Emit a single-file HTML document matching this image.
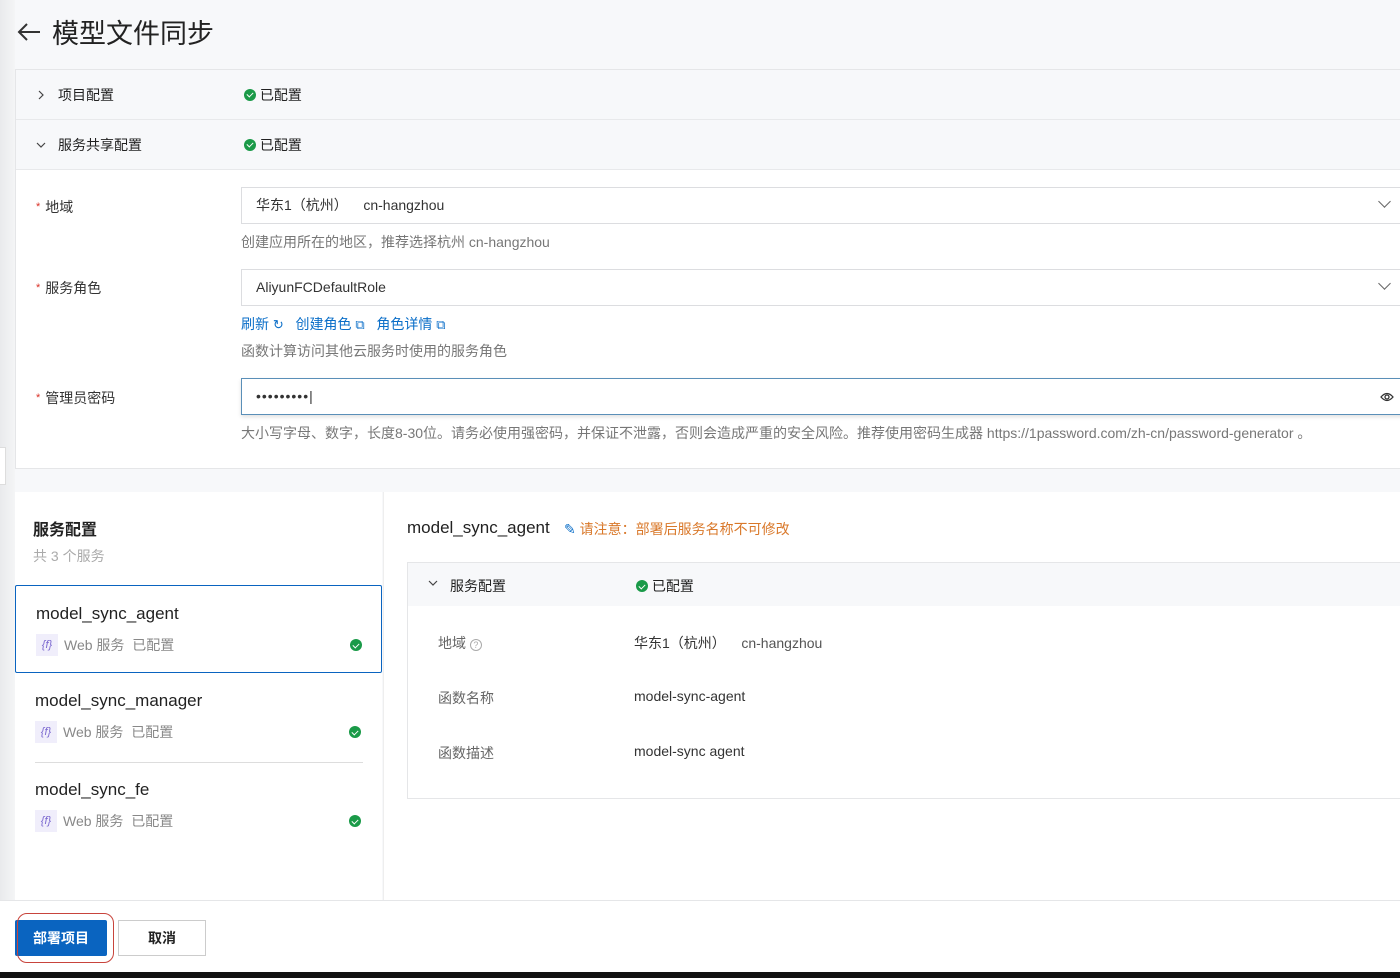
<!DOCTYPE html>
<html><head><meta charset="utf-8"><style>
*{box-sizing:border-box;margin:0;padding:0}
body{width:1400px;height:978px;overflow:hidden;background:#f7f8fa;font-family:"Liberation Sans","Noto Sans CJK SC",sans-serif;color:#333;position:relative;font-size:14px}
.abs{position:absolute}
.strip{left:0;top:0;width:15px;height:972px;background:linear-gradient(90deg,#e9eaec,#f4f5f6)}
.title{left:16px;top:12px;font-size:27px;color:#222;display:flex;align-items:center;gap:10px}
.panel{left:15px;top:69px;width:1390px;height:400px;border:1px solid #e5e6e8;background:#fff}
.row{position:absolute;left:0;width:100%;height:50px;background:#f7f8fa;border-bottom:1px solid #e8e9eb;display:flex;align-items:center}
.row .lab{position:absolute;left:42px;font-size:14px;color:#222}
.row svg{position:absolute;left:20px}
.ok{display:inline-block;width:12px;height:12px;border-radius:50%;background:#1a9a48;position:relative;vertical-align:-1px}
.ok:after{content:"";position:absolute;left:3.5px;top:2.5px;width:3px;height:5px;border:solid #fff;border-width:0 1.5px 1.5px 0;transform:rotate(45deg)}
.st{position:absolute;left:228px;font-size:14px;color:#222}
.flab{position:absolute;left:20px;font-size:14px;color:#333}
.flab b{color:#d93026;font-weight:normal;font-size:11px;margin-right:5px;vertical-align:2px}
.inp{position:absolute;left:225px;width:1170px;height:37px;border:1px solid #dcdde0;background:#fff;font-size:14px;padding-left:14px;line-height:35px;color:#333}
.inp .dd{position:absolute;left:1138px;top:9px;width:9px;height:9px;border:solid #666;border-width:0 1.3px 1.3px 0;transform:rotate(45deg)}
.help{position:absolute;left:225px;font-size:14px;color:#777}
.link{color:#0a6ec8}
.left{left:15px;top:492px;width:367px;height:408px;background:#fff}
.right{left:383px;top:492px;width:1017px;height:408px;background:#fff;border-left:1px solid #eee}
.svc{position:absolute;left:0;width:367px;height:88px}
.svc .n{position:absolute;left:20px;top:18px;font-size:17px;color:#222}
.svc .m{position:absolute;left:20px;top:48px;font-size:14px;color:#888;display:flex;align-items:center;gap:6px}
.fi{width:22px;height:22px;background:#f0eefb;color:#7b68d0;font-size:11px;text-align:center;line-height:22px;font-style:italic}
.svc .ok{position:absolute;left:334px;top:53px}
.foot{left:0;top:900px;width:1400px;height:72px;background:#fff;border-top:1px solid #e5e6e8}
.black{left:0;top:972px;width:1400px;height:6px;background:#111}
</style></head><body>
<div class="abs strip"></div>
<div class="abs" style="left:0;top:447px;width:6px;height:38px;background:#fff;border:1px solid #ddd;border-left:none"></div>
<div class="abs title"><svg width="26" height="20" viewBox="0 0 26 20"><path d="M24 10H3M11 2L3 10l8 8" fill="none" stroke="#333" stroke-width="2"/></svg><span>模型文件同步</span></div>

<div class="abs panel">
 <div class="row" style="top:0"><svg width="10" height="10" viewBox="0 0 10 10"><path d="M3 1l4 4-4 4" fill="none" stroke="#444" stroke-width="1.2"/></svg><span class="lab">项目配置</span><span class="st"><span class="ok"></span> 已配置</span></div>
 <div class="row" style="top:50px"><svg width="10" height="10" viewBox="0 0 10 10"><path d="M1 3l4 4 4-4" fill="none" stroke="#444" stroke-width="1.2"/></svg><span class="lab">服务共享配置</span><span class="st"><span class="ok"></span> 已配置</span></div>
 <div class="flab" style="top:127px"><b>*</b>地域</div>
 <div class="inp" style="top:117px">华东1（杭州）&nbsp;&nbsp;&nbsp; cn-hangzhou<span class="dd"></span></div>
 <div class="help" style="top:162px">创建应用所在的地区，推荐选择杭州 cn-hangzhou</div>
 <div class="flab" style="top:208px"><b>*</b>服务角色</div>
 <div class="inp" style="top:199px">AliyunFCDefaultRole<span class="dd"></span></div>
 <div class="help link" style="top:244px">刷新 <span style="font-size:13px">↻</span>&nbsp;&nbsp; 创建角色 <span style="font-size:13px">⧉</span>&nbsp;&nbsp; 角色详情 <span style="font-size:13px">⧉</span></div>
 <div class="help" style="top:271px">函数计算访问其他云服务时使用的服务角色</div>
 <div class="flab" style="top:318px"><b>*</b>管理员密码</div>
 <div class="inp" style="top:308px;border-color:#5a8fb8;box-shadow:0 2px 4px rgba(0,0,0,.12);letter-spacing:1px">•••••••••|<svg style="position:absolute;left:1138px;top:12px" width="14" height="12" viewBox="0 0 14 12"><path d="M1 6Q7-1 13 6Q7 13 1 6Z" fill="none" stroke="#333" stroke-width="1.3"/><circle cx="7" cy="6" r="2" fill="none" stroke="#333" stroke-width="1.3"/></svg></div>
 <div class="help" style="top:353px">大小写字母、数字，长度8-30位。请务必使用强密码，并保证不泄露，否则会造成严重的安全风险。推荐使用密码生成器 https://1password.com/zh-cn/password-generator 。</div>
</div>

<div class="abs left">
 <div class="abs" style="left:18px;top:24px;font-size:16px;font-weight:bold;color:#222">服务配置</div>
 <div class="abs" style="left:18px;top:54px;font-size:14px;color:#aaa">共 3 个服务</div>
 <div class="svc" style="top:93px;border:1.5px solid #0a64c0;border-radius:2px"><div class="n">model_sync_agent</div><div class="m"><span class="fi">{f}</span>Web 服务 &nbsp;已配置</div><span class="ok"></span></div>
 <div class="svc" style="top:181px"><div class="n">model_sync_manager</div><div class="m"><span class="fi">{f}</span>Web 服务 &nbsp;已配置</div><span class="ok"></span></div>
 <div class="abs" style="left:20px;top:270px;width:328px;height:1px;background:#ddd"></div>
 <div class="svc" style="top:270px"><div class="n">model_sync_fe</div><div class="m"><span class="fi">{f}</span>Web 服务 &nbsp;已配置</div><span class="ok"></span></div>
</div>

<div class="abs right">
 <div class="abs" style="left:23px;top:26px;font-size:17px;color:#222">model_sync_agent</div>
 <div class="abs" style="left:180px;top:27px;font-size:14px;color:#d9782a"><span style="color:#0a6ec8">✎</span> 请注意：部署后服务名称不可修改</div>
 <div class="abs" style="left:23px;top:70px;width:1000px;height:237px;border:1px solid #e5e6e8;background:#fff">
  <div class="abs" style="left:0;top:0;width:100%;height:43px;background:#f7f8fa"></div>
  <svg class="abs" style="left:20px;top:15px" width="10" height="10" viewBox="0 0 10 10"><path d="M1 3l4 4 4-4" fill="none" stroke="#444" stroke-width="1.2"/></svg>
  <div class="abs" style="left:42px;top:13px;font-size:14px;color:#222">服务配置</div>
  <div class="abs" style="left:228px;top:13px;font-size:14px;color:#222"><span class="ok"></span> 已配置</div>
  <div class="abs" style="left:30px;top:70px;color:#666">地域 <span style="display:inline-block;width:12px;height:12px;border:1px solid #aaa;border-radius:50%;font-size:9px;text-align:center;line-height:11px;color:#aaa">?</span></div>
  <div class="abs" style="left:226px;top:70px;color:#333">华东1（杭州）&nbsp;&nbsp;&nbsp; <span style="color:#555">cn-hangzhou</span></div>
  <div class="abs" style="left:30px;top:125px;color:#666">函数名称</div>
  <div class="abs" style="left:226px;top:125px;color:#333">model-sync-agent</div>
  <div class="abs" style="left:30px;top:180px;color:#666">函数描述</div>
  <div class="abs" style="left:226px;top:180px;color:#333">model-sync agent</div>
 </div>
</div>

<div class="abs foot">
 <div class="abs" style="left:15px;top:19px;width:92px;height:36px;background:#0a64c0;color:#fff;font-size:14px;font-weight:bold;text-align:center;line-height:36px;border-radius:2px">部署项目</div>
 <div class="abs" style="left:17px;top:12px;width:97px;height:50px;border:1.3px solid #c8443c;border-radius:10px"></div>
 <div class="abs" style="left:118px;top:19px;width:88px;height:36px;background:#fff;border:1px solid #ccc;color:#222;font-size:14px;font-weight:bold;text-align:center;line-height:34px">取消</div>
</div>
<div class="abs black"></div>
</body></html>
